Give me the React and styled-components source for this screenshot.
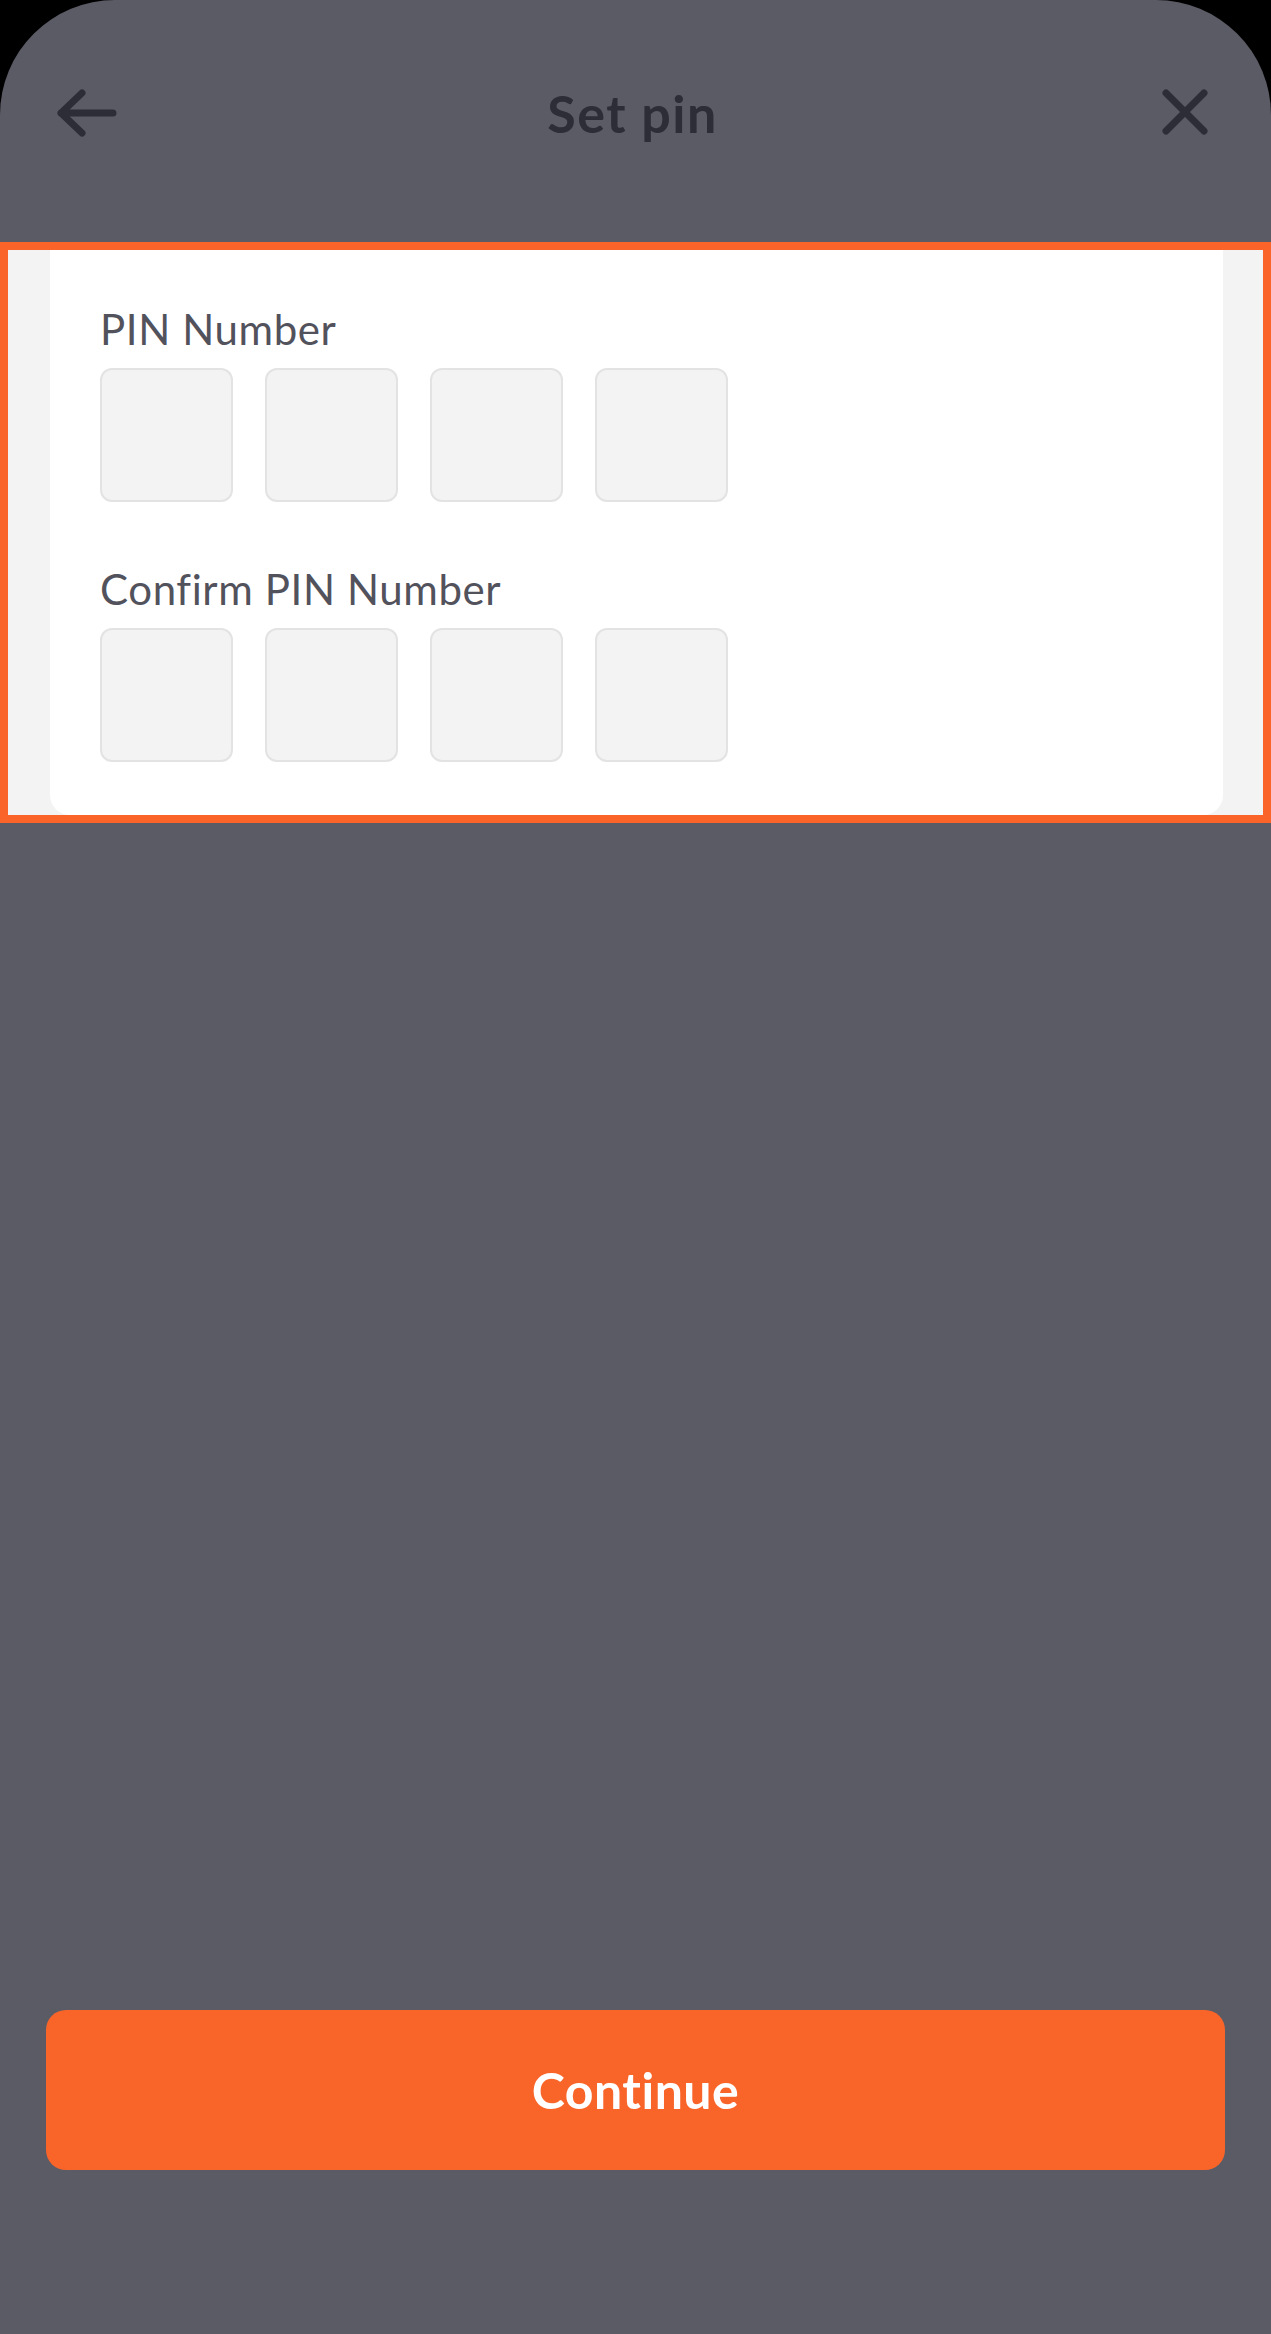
import React from "react";
import styled, { createGlobalStyle } from "styled-components";

const GlobalStyle = createGlobalStyle`
  html, body { margin: 0; padding: 0; background: #000; }
  body { font-family: "Lato", "Open Sans", sans-serif; }
  * { box-sizing: border-box; }
`;

const Screen = styled.div`
  width: 1271px;
  height: 2334px;
  background: #5b5b66;
  border-radius: 115px 115px 0 0;
  display: flex;
  flex-direction: column;
  overflow: hidden;
`;

const Header = styled.header`
  height: 242px;
  padding: 89px 63px 0 57px;
  display: grid;
  grid-template-columns: 1fr auto 1fr;
  align-items: start;
`;

const IconButton = styled.button`
  border: 0;
  background: none;
  padding: 0;
  display: flex;
  justify-self: ${(p) => (p.$end ? "end" : "start")};
  color: #2d2d37;
  cursor: pointer;
`;

const Title = styled.h1`
  margin: 0;
  font-family: "Lato", sans-serif;
  font-weight: 700;
  font-size: 52px;
  line-height: 48px;
  letter-spacing: 1.5px;
  color: #2d2d37;
`;

const Highlight = styled.section`
  height: 581px;
  border: 8px solid #fa6428;
  background: #f3f3f3;
  padding: 0 40px 0 42px;
`;

const Card = styled.div`
  height: 100%;
  background: #fff;
  border-radius: 0 0 20px 20px;
  padding: 54px 50px 50px;
`;

const Label = styled.div`
  font-family: "Lato", sans-serif;
  font-size: 42px;
  line-height: 50px;
  letter-spacing: 0.6px;
  color: #52525c;
  margin-top: ${(p) => p.$top || 0}px;
`;

const PinRow = styled.div`
  display: flex;
  gap: 32px;
  margin-top: ${(p) => p.$top || 0}px;
`;

const PinBox = styled.div`
  width: 133px;
  height: 134px;
  background: #f3f3f3;
  border: 2px solid #e3e3e3;
  border-radius: 12px;
`;

const Footer = styled.div`
  margin-top: auto;
  padding: 0 46px 164px;
`;

const ContinueButton = styled.button`
  width: 100%;
  height: 160px;
  border: 0;
  border-radius: 20px;
  background: #f96529;
  color: #fff;
  font-family: "Lato", sans-serif;
  font-weight: 700;
  font-size: 50px;
  letter-spacing: 0.5px;
  cursor: pointer;
`;

const PinField = ({ label, top }) => (
  <>
    <Label $top={top}>{label}</Label>
    <PinRow $top={14}>
      {[0, 1, 2, 3].map((i) => (
        <PinBox key={i} />
      ))}
    </PinRow>
  </>
);

export default function App() {
  return (
    <>
      <GlobalStyle />
      <Screen>
        <Header>
          <IconButton aria-label="Back">
            <svg width="60" height="48" viewBox="0 0 60 48" fill="none" stroke="currentColor" strokeWidth="7" strokeLinecap="round" strokeLinejoin="round">
              <path d="M4 24H56M25 4L4 24L25 44" />
            </svg>
          </IconButton>
          <Title>Set pin</Title>
          <IconButton $end aria-label="Close">
            <svg width="46" height="46" viewBox="0 0 46 46" fill="none" stroke="currentColor" strokeWidth="7" strokeLinecap="round">
              <path d="M4 4L42 42M42 4L4 42" />
            </svg>
          </IconButton>
        </Header>
        <Highlight>
          <Card>
            <PinField label="PIN Number" top={0} />
            <PinField label="Confirm PIN Number" top={62} />
          </Card>
        </Highlight>
        <Footer>
          <ContinueButton>Continue</ContinueButton>
        </Footer>
      </Screen>
    </>
  );
}
